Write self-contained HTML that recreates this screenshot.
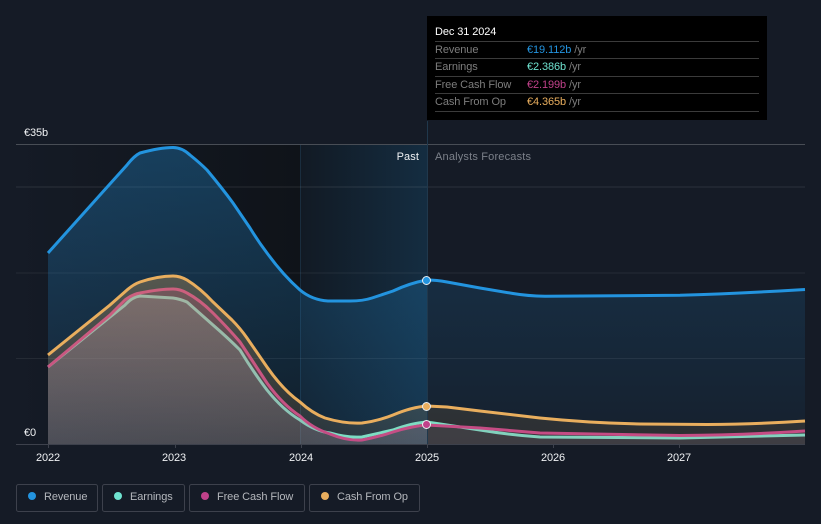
<!DOCTYPE html>
<html><head><meta charset="utf-8">
<style>
html,body{margin:0;padding:0;background:#151b26;width:821px;height:524px;overflow:hidden}
svg{display:block}
text{font-family:"Liberation Sans",sans-serif;font-size:11px;letter-spacing:-.1px}
</style></head>
<body>
<svg width="821" height="524" viewBox="0 0 821 524" xmlns="http://www.w3.org/2000/svg">
<defs>
<linearGradient id="dark" x1="0" x2="1" y1="0" y2="0"><stop offset="0" stop-color="#151b26"/><stop offset="1" stop-color="#0f1319"/></linearGradient>
<linearGradient id="band" x1="0" x2="1" y1="0" y2="0"><stop offset="0" stop-color="#2394df" stop-opacity=".03"/><stop offset="1" stop-color="#2394df" stop-opacity=".18"/></linearGradient>
<linearGradient id="rp" gradientUnits="userSpaceOnUse" x1="0" x2="0" y1="148" y2="445"><stop offset="0" stop-color="#2394df" stop-opacity=".32"/><stop offset="1" stop-color="#2394df" stop-opacity=".08"/></linearGradient>
<linearGradient id="ep" gradientUnits="userSpaceOnUse" x1="0" x2="0" y1="296" y2="445"><stop offset="0" stop-color="#6fe3d0" stop-opacity=".23"/><stop offset="1" stop-color="#6fe3d0" stop-opacity=".16"/></linearGradient>
<linearGradient id="fp" gradientUnits="userSpaceOnUse" x1="0" x2="0" y1="289" y2="445"><stop offset="0" stop-color="#c0418a" stop-opacity=".26"/><stop offset="1" stop-color="#c0418a" stop-opacity=".14"/></linearGradient>
<linearGradient id="cp" gradientUnits="userSpaceOnUse" x1="0" x2="0" y1="276" y2="445"><stop offset="0" stop-color="#e9ae5e" stop-opacity=".3"/><stop offset="1" stop-color="#e9ae5e" stop-opacity=".1"/></linearGradient>
<linearGradient id="rf" gradientUnits="userSpaceOnUse" x1="0" x2="0" y1="280" y2="445"><stop offset="0" stop-color="#2394df" stop-opacity=".15"/><stop offset="1" stop-color="#2394df" stop-opacity=".04"/></linearGradient>
</defs>

<rect x="16" y="145" width="284" height="300" fill="url(#dark)"/>
<rect x="300" y="145" width="127" height="300" fill="#11161e"/>
<rect x="300" y="145" width="127" height="300" fill="url(#band)"/>
<rect x="300" y="145" width="1" height="300" fill="#1a2d3e"/>

<g stroke="#fff" stroke-width="1" shape-rendering="crispEdges">
<line x1="16" x2="805" y1="144.5" y2="144.5" stroke-opacity=".22"/>
<line x1="16" x2="805" y1="187" y2="187" stroke-opacity=".1"/>
<line x1="16" x2="805" y1="273" y2="273" stroke-opacity=".07"/>
<line x1="16" x2="805" y1="358.5" y2="358.5" stroke-opacity=".07"/>
</g>

<path fill="url(#rp)" d="M48 253L100 195L127 165Q134 156 140 153Q160 147.5 173 147.5Q182 147.5 190 155Q200 163 207 170Q222 188 233 203L250 228Q258 241 267 253Q283 275 300 290Q312 300 328 301L350 301Q363 301 372 298L393 291Q410 283 427 280V445H48Z"/>
<path fill="url(#rf)" d="M427 280Q437 280 447 282L480 288L513 293.5Q528 296 545 296.3L680 295.3Q740 293.5 805 289.5V445H427Z"/>
<path fill="none" stroke="#2394df" stroke-width="3" d="M48 253L100 195L127 165Q134 156 140 153Q160 147.5 173 147.5Q182 147.5 190 155Q200 163 207 170Q222 188 233 203L250 228Q258 241 267 253Q283 275 300 290Q312 300 328 301L350 301Q363 301 372 298L393 291Q410 283 427 280Q437 280 447 282L480 288L513 293.5Q528 296 545 296.3L680 295.3Q740 293.5 805 289.5"/>

<path fill="url(#ep)" d="M48 367L110 317L125 305Q132 297 140 296L173 298Q180 299 187 302L213 325Q228 338 240 350Q252 370 267 390Q283 410 300 420Q315 431 330 433Q347 438 362 437L393 430Q412 423 427 422V445H48Z"/>
<path fill="#6fe3d0" fill-opacity=".08" d="M427 422L480 430Q510 435 540 437L680 438L805 435V445H427Z"/>
<path fill="none" stroke="#6fe3d0" stroke-width="3" d="M48 367L110 317L125 305Q132 297 140 296L173 298Q180 299 187 302L213 325Q228 338 240 350Q252 370 267 390Q283 410 300 420Q315 431 330 433Q347 438 362 437L393 430Q412 423 427 422L480 430Q510 435 540 437L680 438L805 435"/>

<path fill="url(#fp)" d="M48 367L110 315L125 300Q133 294 140 293Q160 289 173 289Q180 289 187 293Q200 300 213 313Q228 328 240 342L267 383Q283 405 300 416Q312 428 330 434Q347 441 362 440Q378 437 393 432Q412 426 427 425V445H48Z"/>
<path fill="#c0418a" fill-opacity=".08" d="M427 425L480 428L540 433L680 435.5Q745 435 805 431V445H427Z"/>
<path fill="none" stroke="#c0418a" stroke-width="3" d="M48 367L110 315L125 300Q133 294 140 293Q160 289 173 289Q180 289 187 293Q200 300 213 313Q228 328 240 342L267 383Q283 405 300 416Q312 428 330 434Q347 441 362 440Q378 437 393 432Q412 426 427 425L480 428L540 433L680 435.5Q745 435 805 431"/>

<path fill="url(#cp)" d="M48 355L110 305L127 290Q134 284 140 282Q158 276 173 276Q180 276 187 280Q200 288 213 302L232 320Q240 328 247 338L267 367Q283 390 300 402Q312 413 325 418Q345 424 362 423Q378 421 393 415Q412 407 427 406V445H48Z"/>
<path fill="#e9ae5e" fill-opacity=".11" d="M427 406L447 407L480 411L540 418Q590 423 640 424L707 424.5Q760 424 805 421V445H427Z"/>
<path fill="none" stroke="#e9ae5e" stroke-width="3" d="M48 355L110 305L127 290Q134 284 140 282Q158 276 173 276Q180 276 187 280Q200 288 213 302L232 320Q240 328 247 338L267 367Q283 390 300 402Q312 413 325 418Q345 424 362 423Q378 421 393 415Q412 407 427 406L447 407L480 411L540 418Q590 423 640 424L707 424.5Q760 424 805 421"/>

<rect x="427" y="121" width="1" height="324" fill="#20384c"/>
<rect x="16" y="444" width="789" height="1" fill="#3d414c"/>
<g fill="#3d414c">
<rect x="48" y="445" width="1" height="3"/><rect x="175" y="445" width="1" height="3"/><rect x="301" y="445" width="1" height="3"/><rect x="427" y="445" width="1" height="3"/><rect x="553" y="445" width="1" height="3"/><rect x="679" y="445" width="1" height="3"/>
</g>

<g stroke="#e8eef2" stroke-width="1">
<circle cx="426.5" cy="280.5" r="4" fill="#2394df"/>
<circle cx="426.5" cy="406.5" r="4" fill="#e9ae5e"/>
<circle cx="426.5" cy="424.5" r="4" fill="#c0418a"/>
</g>

<g fill="#f0f2f4">
<text x="24" y="136">€35b</text>
<text x="24" y="436">€0</text>
<text x="48" y="461" text-anchor="middle">2022</text>
<text x="174" y="461" text-anchor="middle">2023</text>
<text x="301" y="461" text-anchor="middle">2024</text>
<text x="427" y="461" text-anchor="middle">2025</text>
<text x="553" y="461" text-anchor="middle">2026</text>
<text x="679" y="461" text-anchor="middle">2027</text>
<text x="419" y="160" text-anchor="end" style="letter-spacing:.1px">Past</text>
</g>
<text x="435" y="160" fill="#7c818a" style="letter-spacing:.18px">Analysts Forecasts</text>

<rect x="427" y="16" width="340" height="104" fill="#000"/>
<g fill="#3b3b3b">
<rect x="435" y="41" width="324" height="1"/><rect x="435" y="58" width="324" height="1"/><rect x="435" y="76" width="324" height="1"/><rect x="435" y="93" width="324" height="1"/><rect x="435" y="111" width="324" height="1"/>
</g>
<text x="435" y="35" fill="#fff">Dec 31 2024</text>
<g fill="#7d7d7d">
<text x="435" y="53">Revenue</text>
<text x="435" y="70">Earnings</text>
<text x="435" y="88">Free Cash Flow</text>
<text x="435" y="105">Cash From Op</text>
</g>
<text x="527" y="53" fill="#2394df">€19.112b <tspan fill="#7d7d7d">/yr</tspan></text>
<text x="527" y="70" fill="#6fe3d0">€2.386b <tspan fill="#7d7d7d">/yr</tspan></text>
<text x="527" y="88" fill="#c0418a">€2.199b <tspan fill="#7d7d7d">/yr</tspan></text>
<text x="527" y="105" fill="#e9ae5e">€4.365b <tspan fill="#7d7d7d">/yr</tspan></text>

<g fill="none" stroke="#3d414c">
<rect x="16.5" y="484.5" width="81" height="27" rx="2"/>
<rect x="102.5" y="484.5" width="82" height="27" rx="2"/>
<rect x="189.5" y="484.5" width="115" height="27" rx="2"/>
<rect x="309.5" y="484.5" width="110" height="27" rx="2"/>
</g>
<circle cx="32" cy="496" r="4" fill="#2394df"/>
<circle cx="118" cy="496" r="4" fill="#6fe3d0"/>
<circle cx="205" cy="496" r="4" fill="#c0418a"/>
<circle cx="325" cy="496" r="4" fill="#e9ae5e"/>
<g fill="#b4b7bc">
<text x="44" y="500">Revenue</text>
<text x="130" y="500">Earnings</text>
<text x="217" y="500">Free Cash Flow</text>
<text x="337" y="500">Cash From Op</text>
</g>
</svg>
</body></html>
